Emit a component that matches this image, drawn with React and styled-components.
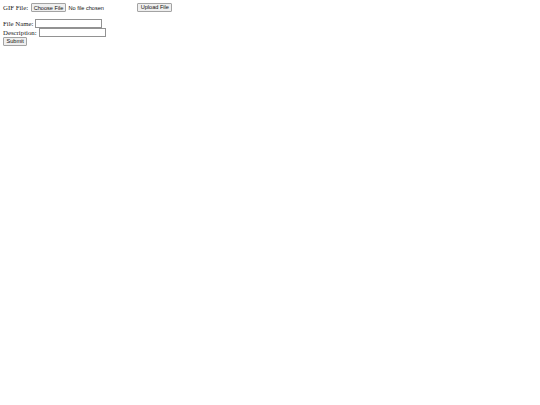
import React from 'react';
import styled, { createGlobalStyle } from 'styled-components';

const GlobalStyle = createGlobalStyle`
  html, body {
    margin: 0;
    padding: 0;
    background: #ffffff;
  }
`;

const Page = styled.div`
  padding: 3px 3px;
  font-family: "Liberation Serif", "Times New Roman", serif;
  font-size: 6.8px;
  color: #1a1a1a;
`;

const Form = styled.form`
  display: flex;
  flex-direction: column;
  margin: 0 0 ${props => props.spaced ? '7px' : '0'};
`;

const Row = styled.div`
  display: flex;
  align-items: center;
  height: 9px;
  gap: ${props => props.gap || '2px'};
`;

const Label = styled.label`
  white-space: nowrap;
  line-height: 9px;
`;

const Button = styled.button`
  box-sizing: border-box;
  height: 9px;
  padding: 0 2.5px;
  margin: 0;
  border: 1px solid #a3a3a3;
  border-radius: 1px;
  background: #efefef;
  color: #111;
  font-family: "Liberation Sans", Arial, sans-serif;
  font-size: 5.6px;
  line-height: 7px;
  white-space: nowrap;
`;

const FileInput = styled.input`
  box-sizing: border-box;
  width: ${props => props.width}px;
  height: 9px;
  margin: 0;
  padding: 0;
  font-family: "Liberation Sans", Arial, sans-serif;
  font-size: 5.6px;
  line-height: 9px;
  color: #111;

  &::file-selector-button {
    box-sizing: border-box;
    height: 9px;
    padding: 0 2px;
    margin: 0 2px 0 0;
    border: 1px solid #a3a3a3;
    border-radius: 1px;
    background: #efefef;
    color: #111;
    font-family: "Liberation Sans", Arial, sans-serif;
    font-size: 5.6px;
  }
`;

const TextInput = styled.input`
  box-sizing: border-box;
  width: ${props => props.width}px;
  height: 8.5px;
  margin: 0;
  padding: 0 1px;
  border: 1px solid #929292;
  border-radius: 0;
  background: #fff;
  font-family: "Liberation Sans", Arial, sans-serif;
  font-size: 5.6px;
`;

function App() {
  return (
    <>
      <GlobalStyle />
      <Page>
        <Form spaced onSubmit={(e) => e.preventDefault()}>
          <Row gap="2.5px">
            <Label htmlFor="gif">GIF File:</Label>
            <FileInput id="gif" type="file" accept="image/gif" name="gif" width={104} />
            <Button type="submit">Upload File</Button>
          </Row>
        </Form>
        <Form onSubmit={(e) => e.preventDefault()}>
          <Row>
            <Label htmlFor="filename">File Name:</Label>
            <TextInput id="filename" type="text" name="filename" width={67} />
          </Row>
          <Row>
            <Label htmlFor="description">Description:</Label>
            <TextInput id="description" type="text" name="description" width={67} />
          </Row>
          <Row>
            <Button type="submit">Submit</Button>
          </Row>
        </Form>
      </Page>
    </>
  );
}

export default App;
